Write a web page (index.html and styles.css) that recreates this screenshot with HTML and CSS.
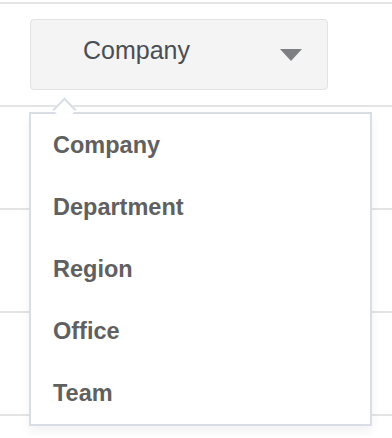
FILE: index.html
```html
<!DOCTYPE html>
<html lang="en">
<head>
    <meta charset="UTF-8">
    <meta name="viewport" content="width=device-width, initial-scale=1.0">
    <title>Group By</title>
    <link rel="stylesheet" href="styles.css">
</head>
<body>

<div class="table">
    <div class="row">
        <div class="select">
            <button class="select-btn">
                <span class="label">Company</span>
                <span class="arrow"></span>
            </button>
            <ul class="menu">
                <li>Company</li>
                <li>Department</li>
                <li>Region</li>
                <li>Office</li>
                <li>Team</li>
            </ul>
        </div>
    </div>
    <div class="row"></div>
    <div class="row"></div>
    <div class="row"></div>
    <div class="row last"></div>
</div>

</body>
</html>
```

FILE: styles.css
```css
body {
    margin: 0;
    font-family: "Liberation Sans", Arial, sans-serif;
    background: #fff;
}
.table {
    padding-top: 2px;
}
.row {
    height: 101px;
    border-top: 2px solid #e4e4e4;
}
.row.last {
    height: 20px;
}
.select {
    position: relative;
    margin: 15px 0 0 30px;
    width: 298px;
}
.select-btn {
    display: flex;
    align-items: center;
    justify-content: space-between;
    box-sizing: border-box;
    width: 298px;
    height: 71px;
    padding: 0 25px 0 52px;
    background: #f4f4f4;
    border: 1px solid #e2e2e2;
    border-radius: 4px;
    font-family: inherit;
    font-size: 25px;
    color: #4a4e54;
}
.label {
    margin-bottom: 9px;
}
.arrow {
    width: 0;
    height: 0;
    border-left: 11.5px solid transparent;
    border-right: 11.5px solid transparent;
    border-top: 12px solid #7d7f82;
}
.menu {
    position: absolute;
    top: 93px;
    left: -1px;
    width: 339px;
    margin: 0;
    padding: 0;
    list-style: none;
    background: #fff;
    border: 2px solid #d8dde6;
    box-shadow: 0 6px 10px rgba(0, 0, 0, 0.05);
}
.menu::before {
    content: "";
    position: absolute;
    top: -13.5px;
    left: 24.5px;
    width: 17px;
    height: 17px;
    box-sizing: border-box;
    background: #fff;
    border-top: 2px solid #d8dde6;
    border-left: 2px solid #d8dde6;
    transform: rotate(45deg);
}
.menu li {
    height: 62px;
    line-height: 62px;
    padding-left: 22px;
    font-size: 23.5px;
    font-weight: bold;
    color: #606060;
}
```
